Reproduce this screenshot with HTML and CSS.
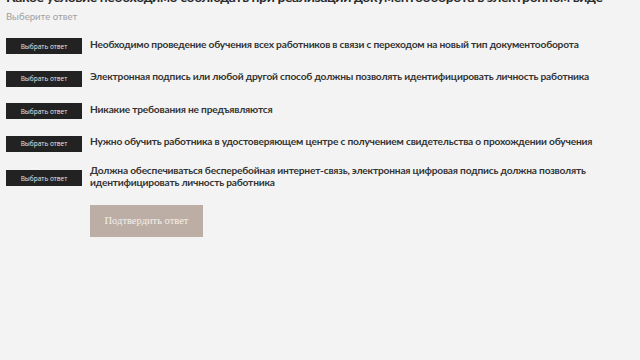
FILE: index.html
```html
<!DOCTYPE html>
<html lang="ru">
<head>
<meta charset="utf-8">
<title>Тест</title>
<link rel="stylesheet" href="styles.css">
</head>
<body>
<div class="quiz">
	<h2 class="quiz_title">Какое условие необходимо соблюдать при реализации документооборота в электронном виде</h2>
	<p class="quiz_hint">Выберите ответ</p>
	<ul class="answers">
		<li class="answer"><button class="answer_btn" type="button">Выбрать ответ</button><span class="answer_text">Необходимо проведение обучения всех работников в связи с переходом на новый тип документооборота</span></li>
		<li class="answer"><button class="answer_btn" type="button">Выбрать ответ</button><span class="answer_text">Электронная подпись или любой другой способ должны позволять идентифицировать личность работника</span></li>
		<li class="answer"><button class="answer_btn" type="button">Выбрать ответ</button><span class="answer_text">Никакие требования не предъявляются</span></li>
		<li class="answer"><button class="answer_btn" type="button">Выбрать ответ</button><span class="answer_text">Нужно обучить работника в удостоверяющем центре с получением свидетельства о прохождении обучения</span></li>
		<li class="answer"><button class="answer_btn" type="button">Выбрать ответ</button><span class="answer_text">Должна обеспечиваться бесперебойная интернет-связь, электронная цифровая подпись должна позволять идентифицировать личность работника</span></li>
	</ul>
	<button class="confirm_btn" type="button">Подтвердить ответ</button>
</div>
</body>
</html>
```

FILE: styles.css
```css
html, body { margin:0; padding:0; }
body {
	background-color:#f3f3f3;
	font-family:Lato, "Open Sans", sans-serif;
	color:#333;
	overflow:hidden;
}
.quiz { padding:0 6px; }
.quiz_title {
	margin:-12px 0 0;
	font-size:14px;
	line-height:18px;
	font-weight:700;
	letter-spacing:-0.4px;
	color:#2b2b2b;
	white-space:nowrap;
}
.quiz_hint {
	margin:4px 0 0;
	font-size:9.6px;
	line-height:14px;
	color:#a0a0a0;
}
.answers {
	list-style:none;
	margin:14px 0 0;
	padding:0;
}
.answer {
	display:flex;
	align-items:center;
	min-height:16px;
	margin-bottom:16.5px;
}
.answer_btn {
	flex:0 0 76px;
	height:16px;
	margin:0 8px 0 0;
	padding:0;
	border:0;
	background-color:#222;
	color:#e6e6e6;
	font-family:"Open Sans", sans-serif;
	font-size:6.5px;
	cursor:pointer;
}
.answer_text {
	font-size:10.2px;
	line-height:11.5px;
	font-weight:700;
	letter-spacing:-0.2px;
	color:#333;
	padding-right:34px;
	margin-top:-3px;
}
.confirm_btn {
	display:block;
	margin:7px 0 0 84px;
	width:113px;
	height:32px;
	border:0;
	background-color:#bcaea4;
	color:#f4efea;
	font-family:"Liberation Serif", serif;
	font-size:10.5px;
	cursor:pointer;
}
```
